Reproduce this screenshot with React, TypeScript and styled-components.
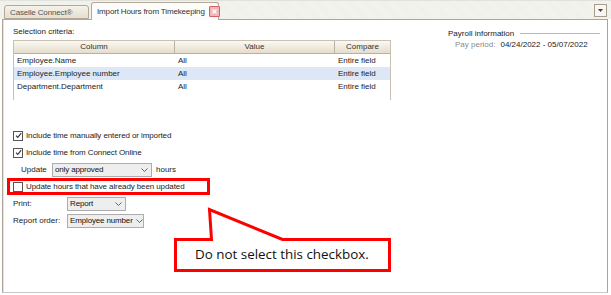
import styled, { createGlobalStyle } from "styled-components";

const Global = createGlobalStyle`
  body {
    margin: 0;
    background: #fff;
    font-family: "Liberation Sans", Arial, sans-serif;
    font-size: 8px;
    color: #222;
  }
`;

const Window = styled.div`
  position: relative;
  width: 611px;
  height: 295px;
  display: flex;
  flex-direction: column;
  background: #fff;
  overflow: hidden;
`;

const TabBar = styled.div`
  height: 18px;
  display: flex;
  align-items: flex-end;
  gap: 2px;
  padding: 0 4px 0 4px;
  background: repeating-linear-gradient(45deg, #eef0e9 0 1px, #f3f4ef 1px 2px);
  border-top: 1px solid #e2e2dc;
`;

const Tab = styled.div<{ $active?: boolean }>`
  height: ${(p) => (p.$active ? "18px" : "14px")};
  margin-bottom: ${(p) => (p.$active ? "-1px" : "0")};
  padding: 0 2px 0 5px;
  display: flex;
  align-items: center;
  gap: 4px;
  box-sizing: border-box;
  width: ${(p) => (p.$active ? "128px" : "85px")};
  border: 1px solid #b4a898;
  border-bottom: ${(p) => (p.$active ? "none" : "1px solid #b4a898")};
  border-radius: 3px 3px 0 0;
  background: ${(p) =>
    p.$active ? "#fcfcfa" : "linear-gradient(#f5f2e9, #e6dfcf)"};
  color: ${(p) => (p.$active ? "#333" : "#555")};
  font-size: 8px;
  letter-spacing: -0.15px;
  white-space: nowrap;
  position: relative;
  z-index: 1;
`;

const CloseBox = styled.span`
  flex-shrink: 0;
  width: 9px;
  height: 9px;
  margin-left: auto;
  border: 1px solid #c66;
  border-radius: 1px;
  background: #f3b5b5;
  display: flex;
  align-items: center;
  justify-content: center;
`;

const MenuButton = styled.div`
  margin-left: auto;
  align-self: center;
  width: 11px;
  height: 11px;
  border: 1px solid #a89c8c;
  background: #f7f6f1;
  display: flex;
  align-items: center;
  justify-content: center;
`;

const Panel = styled.div`
  flex: 1;
  margin: 0 3px 2px 2px;
  border: 1px solid #b0a494;
  border-bottom: 1px solid #c8c8c8;
  background: #fff;
  display: flex;
  padding: 6px 0 0 10px;
  box-shadow: inset 1px 0 0 #e8e2da;
`;

const LeftCol = styled.div`
  width: 378px;
  display: flex;
  flex-direction: column;
`;

const RightCol = styled.div`
  margin-left: 57px;
  width: 152px;
  display: flex;
  flex-direction: column;
`;

const Label = styled.div`
  height: 12px;
  line-height: 12px;
  white-space: nowrap;
`;

const Table = styled.div`
  margin-top: 2px;
  height: 60px;
  border: 1px solid #c9c1b3;
  border-bottom: none;
  box-sizing: border-box;
`;

const Row = styled.div<{ $selected?: boolean }>`
  display: grid;
  grid-template-columns: 161px 160px 1fr;
  height: 13px;
  line-height: 13px;
  background: ${(p) => (p.$selected ? "#dde7f6" : "transparent")};
`;

const HeadRow = styled(Row)`
  height: 12px;
  line-height: 12px;
  background: linear-gradient(#fbf9f3, #e5ddcc);
  border-bottom: 1px solid #bdb19e;
  color: #333;
`;

const HeadCell = styled.div`
  text-align: center;
  border-right: 1px solid #bdb19e;
  &:last-child {
    border-right: none;
  }
`;

const Cell = styled.div`
  padding-left: 3px;
  white-space: nowrap;
`;

const Options = styled.div`
  margin-top: 27px;
  display: flex;
  flex-direction: column;
`;

const CheckRow = styled.label<{ $flagged?: boolean }>`
  height: 17px;
  display: flex;
  align-items: center;
  gap: 3px;
  box-sizing: border-box;
  white-space: nowrap;
  letter-spacing: -0.1px;
  ${(p) =>
    p.$flagged
      ? `margin-left: -6px; width: 203px; padding-left: 3px; border: 3px solid #f00;`
      : `padding-left: 0;`}
`;

const Box = styled.span`
  flex-shrink: 0;
  width: 8px;
  height: 8px;
  border: 1px solid #555;
  background: #fff;
  display: flex;
  align-items: center;
  justify-content: center;
`;

const FieldRow = styled.div<{ $indent?: number; $labelWidth: number }>`
  height: 17px;
  display: grid;
  grid-template-columns: ${(p) => p.$labelWidth}px auto auto;
  justify-content: start;
  align-items: center;
  padding-left: ${(p) => p.$indent ?? 0}px;
  column-gap: 4px;
  white-space: nowrap;
`;

const Select = styled.div<{ $width: number }>`
  width: ${(p) => p.$width}px;
  height: 14px;
  box-sizing: border-box;
  border: 1px solid #adadad;
  background: #eeeeee;
  display: flex;
  align-items: center;
  padding: 0 3px 0 2px;
  color: #111;
  justify-content: space-between;
  white-space: nowrap;
  letter-spacing: -0.15px;
`;

const ChevronSvg = styled.svg`
  flex-shrink: 0;
  margin-left: 3px;
`;

const Section = styled.div`
  margin-top: 1px;
  display: flex;
  align-items: center;
  gap: 6px;
  height: 12px;
  &::after {
    content: "";
    flex: 1;
    border-top: 1px solid #b8b8b8;
  }
`;

const InfoRow = styled.div`
  padding-left: 7px;
  height: 12px;
  line-height: 12px;
  display: flex;
  gap: 5px;
`;

const Muted = styled.span`
  color: #8a8a8a;
`;

const Callout = styled.div`
  position: absolute;
  left: 172px;
  top: 207px;
  width: 220px;
  height: 66px;
`;

const CalloutText = styled.div`
  position: absolute;
  left: 3px;
  right: 3px;
  top: 32px;
  height: 29px;
  display: flex;
  align-items: center;
  padding-left: 20px;
  font-family: "Open Sans", "Liberation Sans", sans-serif;
  font-size: 13.4px;
  color: #111;
`;

const Chevron = () => (
  <ChevronSvg width="7" height="4" viewBox="0 0 7 4">
    <path d="M0.5 0.5 L3.5 3.5 L6.5 0.5" fill="none" stroke="#555" strokeWidth="0.9" />
  </ChevronSvg>
);

const Tick = () => (
  <svg width="7" height="7" viewBox="0 0 7 7">
    <path d="M1 3.6 L2.8 5.4 L6.2 1.2" fill="none" stroke="#333" strokeWidth="1.1" />
  </svg>
);

const criteria = [
  { column: "Employee.Name", value: "All", compare: "Entire field" },
  { column: "Employee.Employee number", value: "All", compare: "Entire field", selected: true },
  { column: "Department.Department", value: "All", compare: "Entire field" },
];

export default function App() {
  return (
    <Window>
      <Global />
      <TabBar>
        <Tab>Caselle Connect®</Tab>
        <Tab $active>
          Import Hours from Timekeeping
          <CloseBox>
            <svg width="5" height="5" viewBox="0 0 5 5">
              <path d="M0.5 0.5 L4.5 4.5 M4.5 0.5 L0.5 4.5" stroke="#fff" strokeWidth="1.2" />
            </svg>
          </CloseBox>
        </Tab>
        <MenuButton>
          <svg width="5" height="3" viewBox="0 0 5 3">
            <path d="M0 0 H5 L2.5 3 Z" fill="#444" />
          </svg>
        </MenuButton>
      </TabBar>
      <Panel>
        <LeftCol>
          <Label>Selection criteria:</Label>
          <Table>
            <HeadRow>
              <HeadCell>Column</HeadCell>
              <HeadCell>Value</HeadCell>
              <HeadCell>Compare</HeadCell>
            </HeadRow>
            {criteria.map((c) => (
              <Row key={c.column} $selected={c.selected}>
                <Cell>{c.column}</Cell>
                <Cell>{c.value}</Cell>
                <Cell>{c.compare}</Cell>
              </Row>
            ))}
          </Table>
          <Options>
            <CheckRow>
              <Box><Tick /></Box>
              Include time manually entered or imported
            </CheckRow>
            <CheckRow>
              <Box><Tick /></Box>
              Include time from Connect Online
            </CheckRow>
            <FieldRow $indent={8} $labelWidth={27}>
              <span>Update</span>
              <Select $width={100}>
                only approved <Chevron />
              </Select>
              <span>hours</span>
            </FieldRow>
            <CheckRow $flagged>
              <Box />
              Update hours that have already been updated
            </CheckRow>
            <FieldRow $labelWidth={50}>
              <span>Print:</span>
              <Select $width={59}>
                Report <Chevron />
              </Select>
            </FieldRow>
            <FieldRow $labelWidth={50}>
              <span>Report order:</span>
              <Select $width={77}>
                Employee number <Chevron />
              </Select>
            </FieldRow>
          </Options>
        </LeftCol>
        <RightCol>
          <Section>Payroll information</Section>
          <InfoRow>
            <Muted>Pay period:</Muted>
            <span>04/24/2022 - 05/07/2022</span>
          </InfoRow>
        </RightCol>
      </Panel>
      <Callout>
        <svg width="220" height="66" viewBox="0 0 220 66">
          <path
            d="M3.5 32.5 H39.5 L37.5 2.5 L110.5 32.5 H217.5 V63.5 H3.5 Z"
            fill="#fff"
            stroke="#f00"
            strokeWidth="3"
          />
        </svg>
        <CalloutText>Do not select this checkbox.</CalloutText>
      </Callout>
    </Window>
  );
}
